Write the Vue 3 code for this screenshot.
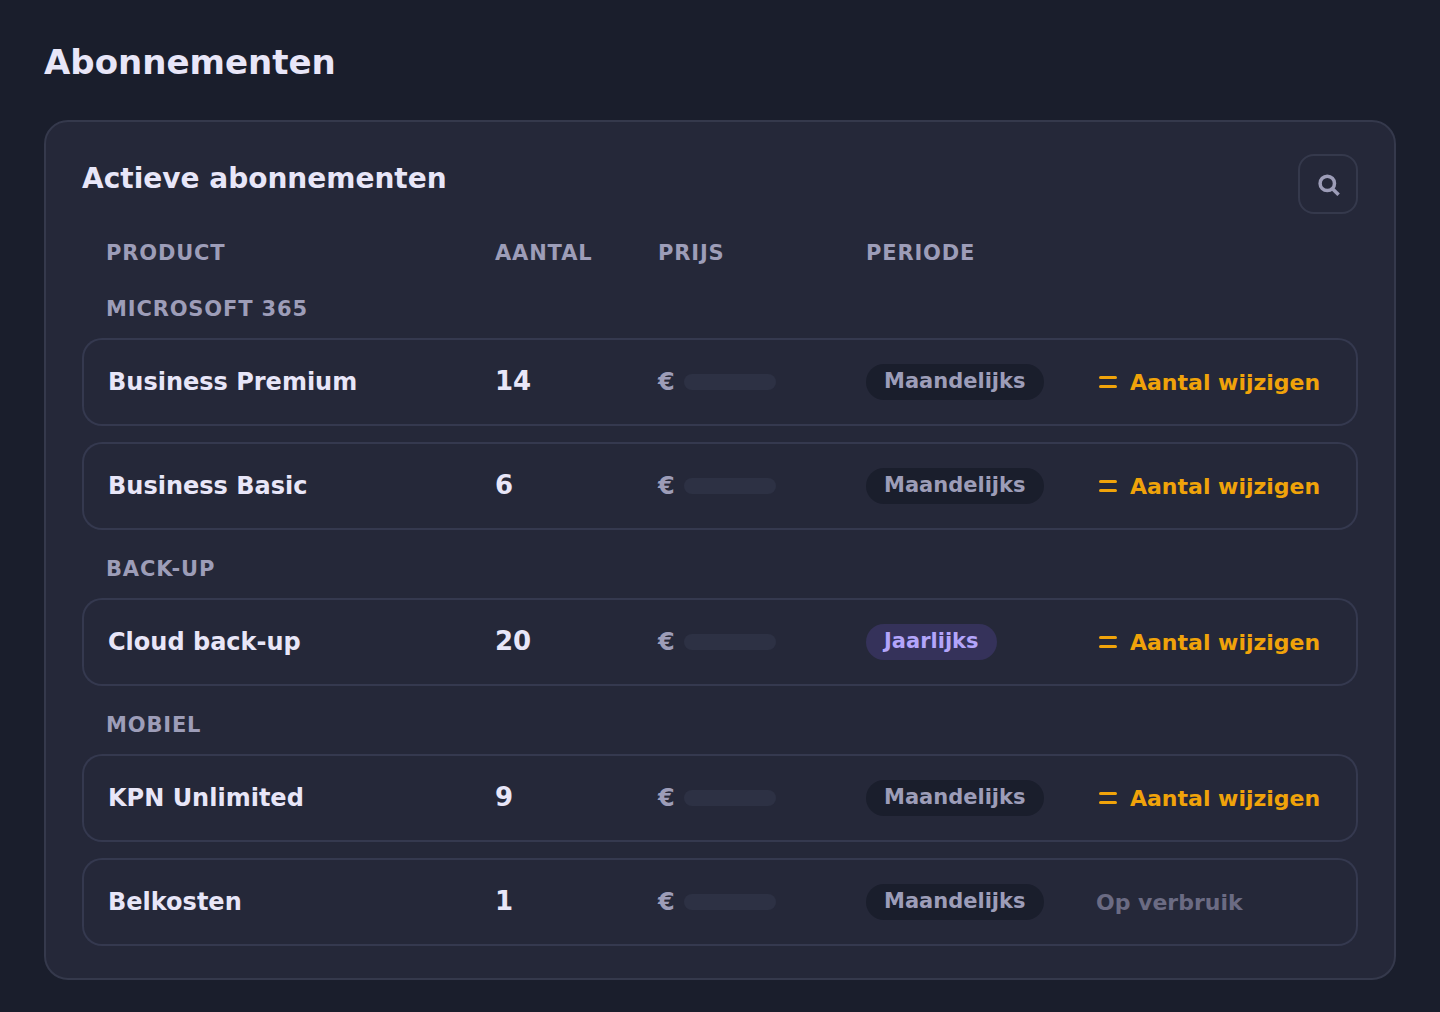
<script setup>
const groups = [
  {
    name: 'Microsoft 365',
    items: [
      { product: 'Business Premium', amount: 14, period: 'Maandelijks' },
      { product: 'Business Basic', amount: 6, period: 'Maandelijks' },
    ],
  },
  {
    name: 'Back-up',
    items: [{ product: 'Cloud back-up', amount: 20, period: 'Jaarlijks' }],
  },
  {
    name: 'Mobiel',
    items: [
      { product: 'KPN Unlimited', amount: 9, period: 'Maandelijks' },
      { product: 'Belkosten', amount: 1, period: 'Maandelijks', metered: true },
    ],
  },
]
</script>

<template>
  <main class="page">
    <h1>Abonnementen</h1>
    <section class="card" aria-labelledby="active-title">
      <header class="card-head">
        <h2 id="active-title">Actieve abonnementen</h2>
        <button class="search" type="button" aria-label="Zoeken">
          <svg width="24" height="24" viewBox="0 0 24 24" fill="none" stroke="currentColor" stroke-width="3.5" aria-hidden="true">
            <circle cx="11.3" cy="11.4" r="7.2" />
            <path d="M16.2 16.4 22.6 22.8" />
          </svg>
        </button>
      </header>
      <table>
        <colgroup>
          <col />
          <col class="col-amount" />
          <col class="col-price" />
          <col class="col-period" />
          <col class="col-action" />
        </colgroup>
        <thead>
          <tr>
            <th scope="col">Product</th>
            <th scope="col">Aantal</th>
            <th scope="col">Prijs</th>
            <th scope="col">Periode</th>
            <td></td>
          </tr>
        </thead>
        <tbody v-for="group in groups" :key="group.name">
          <tr class="group">
            <th colspan="5" scope="rowgroup">{{ group.name }}</th>
          </tr>
          <tr v-for="item in group.items" :key="item.product" class="item">
            <td class="product">{{ item.product }}</td>
            <td class="amount">{{ item.amount }}</td>
            <td>
              <div class="price">€<span class="mask"></span></div>
            </td>
            <td>
              <span class="badge" :class="{ yearly: item.period === 'Jaarlijks' }">{{ item.period }}</span>
            </td>
            <td>
              <span v-if="item.metered" class="metered">Op verbruik</span>
              <button v-else class="change" type="button">
                <svg width="24" height="24" viewBox="0 0 24 24" fill="none" stroke="currentColor" stroke-width="3" stroke-linecap="round" aria-hidden="true">
                  <path d="M4.5 7.5h15M4.5 16.5h15" />
                </svg>
                Aantal wijzigen
              </button>
            </td>
          </tr>
        </tbody>
      </table>
    </section>
  </main>
</template>

<style>
body {
  margin: 0;
  background: #1a1e2c;
}
</style>

<style scoped>
.page {
  padding: 40px 44px 32px;
  color: #e8e6f8;
  font-family: "DejaVu Sans", sans-serif;
  font-weight: 700;
}

h1 {
  margin: 0 0 36px;
  font-size: 34px;
  line-height: 44px;
}

.card {
  padding: 32px 36px 16px;
  border: 2px solid #35394c;
  border-radius: 24px;
  background: #252839;
}

.card-head {
  display: flex;
  justify-content: space-between;
  align-items: flex-start;
  margin-bottom: 4px;
}

h2 {
  margin: 0;
  font-size: 28px;
  line-height: 50px;
}

button {
  padding: 0;
  border: 0;
  background: none;
  font: inherit;
  cursor: pointer;
}

.search {
  display: flex;
  align-items: center;
  justify-content: center;
  box-sizing: border-box;
  width: 60px;
  height: 60px;
  border: 2px solid #35394c;
  border-radius: 16px;
  color: #9d9db8;
}

table {
  width: 100%;
  table-layout: fixed;
  border-collapse: separate;
  border-spacing: 0 16px;
}

.col-amount {
  width: 163px;
}

.col-price {
  width: 208px;
}

.col-period {
  width: 230px;
}

.col-action {
  width: 262px;
}

th {
  box-sizing: border-box;
  height: 36px;
  padding: 2px 0 0;
  color: #9d9db8;
  font-size: 21px;
  line-height: 26px;
  letter-spacing: 0.04em;
  text-align: left;
  text-transform: uppercase;
}

th:first-child {
  padding-left: 24px;
}

.group th {
  padding-top: 10px;
}

td {
  padding: 0;
}

.item td {
  box-sizing: border-box;
  height: 88px;
  border: 0 solid #35394f;
  border-width: 2px 0;
}

.item td:first-child {
  padding-left: 24px;
  border-left-width: 2px;
  border-radius: 20px 0 0 20px;
}

.item td:last-child {
  border-right-width: 2px;
  border-radius: 0 20px 20px 0;
}

.product {
  font-size: 24px;
}

.item .amount {
  padding-bottom: 2px;
  font-size: 26px;
}

.price {
  display: flex;
  align-items: center;
  gap: 9px;
  color: #9d9db8;
  font-size: 24px;
}

.mask {
  width: 92px;
  height: 16px;
  border-radius: 8px;
  background: #2d3144;
}

.badge {
  display: block;
  width: fit-content;
  padding: 0 18px 2px;
  border-radius: 18px;
  background: #1a1e2c;
  color: #9d9db8;
  font-size: 21px;
  line-height: 34px;
}

.yearly {
  background: #35325a;
  color: #b3a5fa;
}

.change {
  display: flex;
  align-items: center;
  gap: 10px;
  color: #f0a30a;
  font-size: 22px;
  white-space: nowrap;
}

.metered {
  color: #6b6b83;
  font-size: 22px;
}
</style>
